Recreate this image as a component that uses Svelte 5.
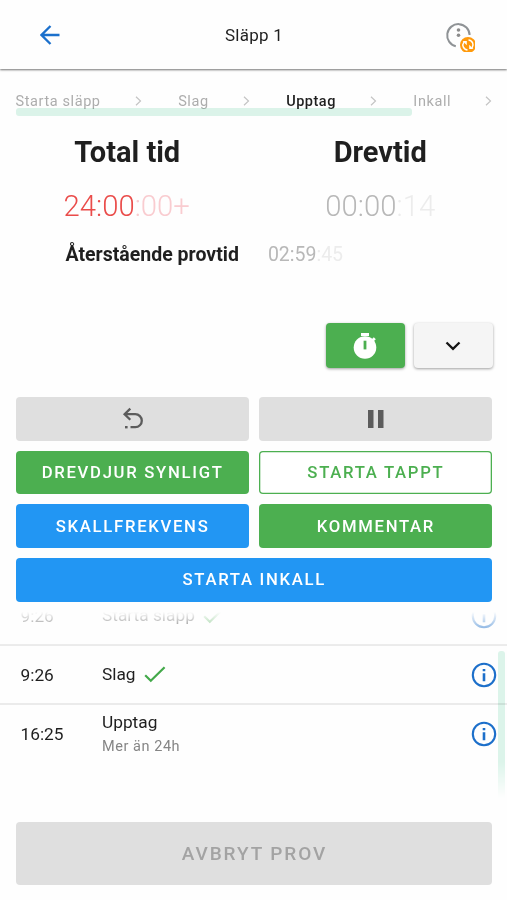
<script lang="ts">
	const steps = [
		{ label: 'Starta släpp', active: false },
		{ label: 'Slag', active: false },
		{ label: 'Upptag', active: true },
		{ label: 'Inkall', active: false }
	];

	const events = [
		{ time: '9:26', title: 'Starta släpp', done: true, note: '' },
		{ time: '9:26', title: 'Slag', done: true, note: '' },
		{ time: '16:25', title: 'Upptag', done: false, note: 'Mer än 24h' }
	];
</script>

<div class="page">
	<header>
		<button class="icon-button" aria-label="Tillbaka">
			<svg class="back" width="20" height="20" viewBox="0 0 20 20">
				<path d="M19.500 10H2M10.500 1 1.500 10l9 9" />
			</svg>
		</button>
		<h1>Släpp 1</h1>
		<button class="icon-button" aria-label="Synkstatus">
			<svg width="34" height="34" viewBox="0 0 34 34">
				<path class="ring" d="M14.800 28.200A11.200 11.200 0 1 1 28.600 17" />
				<circle cx="17.500" cy="12" r="1.800" fill="#8c8c8c" />
				<circle cx="17.500" cy="17.200" r="1.800" fill="#8c8c8c" />
				<circle cx="27" cy="27" r="8" fill="#ff9a0c" />
				<path class="sync" d="M26.500 31.900a4.900 4.900 0 0 1-3.600-7.800M27.500 22.100a4.900 4.900 0 0 1 3.600 7.800" />
				<path fill="#fff" d="M21.600 23h4.200v4.200zM32.400 31h-4.200v-4.200z" />
			</svg>
		</button>
	</header>

	<nav class="steps">
		{#each steps as step}
			<span class="step" class:active={step.active}>{step.label}</span>
			<svg class="chevron" width="7" height="10" viewBox="0 0 7 10"><path d="M1 .8 5.500 5 1 9.200" /></svg>
		{/each}
	</nav>
	<div class="progress"></div>

	<section class="clocks">
		<div class="clock total">
			<h2>Total tid</h2>
			<div class="time">24:00<span>:00+</span></div>
		</div>
		<div class="clock chase">
			<h2>Drevtid</h2>
			<div class="time">00:00<span>:14</span></div>
		</div>
	</section>
	<div class="remaining">
		<strong>Återstående provtid</strong>
		<div class="remaining-time">02:59<span>:45</span></div>
	</div>

	<div class="timer-buttons">
		<button class="raised green" aria-label="Tidtagning">
			<svg width="26" height="28" viewBox="0 0 26 28">
				<path fill="#fff" d="M9 1h8v3H9z" />
				<path fill="#fff" d="m19.500 7.500 2.300-2.300 2 2-2.300 2.300z" />
				<circle cx="13" cy="15.500" r="11.300" fill="#fff" />
				<path fill="#4caf50" d="M11.600 8.700h2.800v8.700h-2.800z" />
			</svg>
		</button>
		<button class="raised light" aria-label="Visa mer">
			<svg width="16" height="10" viewBox="0 0 16 10">
				<path d="m1.500 1.500 6.500 6.300 6.500-6.300" fill="none" stroke="#151515" stroke-width="2.300" />
			</svg>
		</button>
	</div>

	<div class="actions">
		<button class="gray" aria-label="Ångra">
			<svg width="22" height="24" viewBox="0 0 22 24">
				<path d="M2.500 7.200h10.800a6.500 6.500 0 0 1 0 13H8.500M8.300 1.700 2.600 7.200l5.700 5.600" fill="none" stroke="#5c5c5c" stroke-width="2.300" />
				<path d="M3 19h2.600v2.400H3z" fill="#5c5c5c" />
			</svg>
		</button>
		<button class="gray" aria-label="Pausa">
			<svg width="16" height="18" viewBox="0 0 16 18">
				<path d="M0 0h5.500v18H0zM10 0h5.500v18H10z" fill="#5c5c5c" />
			</svg>
		</button>
		<button class="green">DREVDJUR SYNLIGT</button>
		<button class="outlined">STARTA TAPPT</button>
		<button class="blue">SKALLFREKVENS</button>
		<button class="green">KOMMENTAR</button>
		<button class="blue wide">STARTA INKALL</button>
	</div>

	<div class="log">
		<ul>
			{#each events as event}
				<li>
					<span class="event-time">{event.time}</span>
					<div class="event-text">
						<div class="event-title">
							{event.title}
							{#if event.done}
								<svg width="22" height="17" viewBox="0 0 22 17">
									<path d="m1.200 9.300 5.600 5.500L20.600 1.300" fill="none" stroke="#43a94a" stroke-width="2.200" />
								</svg>
							{/if}
						</div>
						{#if event.note}
							<div class="note">{event.note}</div>
						{/if}
					</div>
					<svg class="info" width="26" height="26" viewBox="0 0 26 26">
						<circle cx="13" cy="13" r="11.200" fill="none" stroke="#1c6fca" stroke-width="2.100" />
						<path d="M11.700 6.900h2.600v2.400h-2.600zM11.700 11.300h2.600v7.900h-2.600z" fill="#1c6fca" />
					</svg>
				</li>
			{/each}
		</ul>
		<div class="scrollbar"></div>
	</div>

	<footer>
		<button class="cancel" disabled>AVBRYT PROV</button>
	</footer>
</div>

<style>
	:global(body) {
		margin: 0;
		background: #fefefe;
	}
	.page {
		display: flex;
		flex-direction: column;
		height: 900px;
		overflow: hidden;
		font-family: Roboto, sans-serif;
		color: #1f1f1f;
	}
	button {
		display: flex;
		align-items: center;
		justify-content: center;
		box-sizing: border-box;
		padding: 0;
		border: none;
		border-radius: 4px;
		font-family: inherit;
		font-size: 16.700px;
		font-weight: 500;
		letter-spacing: 1.700px;
		cursor: pointer;
	}
	header {
		flex: none;
		display: flex;
		align-items: center;
		justify-content: space-between;
		box-sizing: border-box;
		height: 69px;
		padding: 0 32px 0 33px;
		box-shadow: 0 1px 2px rgba(0, 0, 0, 0.55);
	}
	h1 {
		margin: 0;
		font-size: 17px;
		font-weight: 400;
		letter-spacing: 0.25px;
	}
	.icon-button {
		width: 34px;
		height: 34px;
		background: none;
	}
	.icon-button svg {
		flex: none;
	}
	.back {
		fill: none;
		stroke: #1b70cc;
		stroke-width: 2.300;
	}
	.ring {
		fill: none;
		stroke: #8f9396;
		stroke-width: 2;
	}
	.sync {
		fill: none;
		stroke: #fff;
		stroke-width: 1.500;
	}
	.steps {
		flex: none;
		display: flex;
		align-items: center;
		height: 20px;
		margin-top: 22px;
		padding-left: 15.500px;
		overflow: hidden;
		font-size: 14.500px;
		letter-spacing: 0.6px;
		white-space: nowrap;
		color: #adadad;
	}
	.step.active {
		color: #1f1f1f;
		font-weight: 500;
		letter-spacing: 0.5px;
	}
	.chevron {
		flex: none;
		margin: 0 36.500px 0 34px;
		fill: none;
		stroke: #c4c4c4;
		stroke-width: 1.200;
	}
	.progress {
		flex: none;
		width: 396px;
		height: 8px;
		margin: -3px 0 0 16px;
		border-radius: 3px;
		background: #dcf4ea;
		mix-blend-mode: multiply;
	}
	.clocks {
		flex: none;
		display: grid;
		grid-template-columns: 1fr 1fr;
		height: 116px;
		text-align: center;
	}
	h2 {
		margin: 18px 0 0;
		font-size: 29px;
		line-height: 36px;
		font-weight: 700;
	}
	.total h2 {
		padding-left: 1px;
	}
	.time {
		margin-top: 18px;
		font-size: 29.300px;
		line-height: 36px;
		font-weight: 350;
	}
	.total .time {
		color: #ea4c4a;
	}
	.total .time span {
		color: #f9ccd0;
	}
	.chase .time {
		color: #b8b8b8;
	}
	.chase .time span,
	.remaining-time span {
		color: #ececec;
	}
	.remaining {
		flex: none;
		display: flex;
		align-items: center;
		gap: 29px;
		height: 44px;
		padding-left: 65.500px;
		font-size: 19.500px;
	}
	.remaining-time {
		color: #b8b8b8;
	}
	.timer-buttons {
		flex: none;
		display: flex;
		justify-content: flex-end;
		gap: 9px;
		margin-top: 47px;
		padding-right: 14px;
	}
	.raised {
		width: 79px;
		height: 45px;
		padding-right: 1px;
		box-shadow: 0 1px 3px rgba(0, 0, 0, 0.38);
	}
	.light {
		background: #f5f5f5;
	}
	.actions {
		flex: none;
		display: grid;
		grid-template-columns: 1fr 1fr;
		grid-auto-rows: 43.700px;
		gap: 10px;
		margin: 29px 15px 0 15.500px;
	}
	.actions button {
		padding-left: 1px;
	}
	.gray {
		background: #dfdfdf;
	}
	.green {
		background: #4caf50;
		color: #fff;
	}
	.blue {
		background: #2296f3;
		color: #fff;
	}
	.outlined {
		background: #fff;
		box-shadow: inset 0 0 0 1.300px #4caf50;
		color: #4caf50;
	}
	.wide {
		grid-column: span 2;
	}
	.log {
		flex: none;
		position: relative;
		height: 188px;
		margin-top: 10px;
		overflow: hidden;
		mask-image: linear-gradient(transparent 0, #000 34px, #000 150px, transparent 186px);
	}
	ul {
		margin: -25px 0 0;
		padding: 0;
		list-style: none;
	}
	li {
		display: flex;
		align-items: center;
		box-sizing: border-box;
		height: 59px;
		padding: 1px 10px 0 20.500px;
		border-bottom: 2px solid #ebebeb;
		font-size: 17.300px;
	}
	li:last-child {
		padding-top: 0;
		border-bottom: none;
	}
	.event-time {
		width: 81.500px;
	}
	.event-text {
		flex: 1;
		margin-top: -1px;
	}
	.event-title {
		display: flex;
		align-items: center;
		gap: 8px;
	}
	.note {
		margin-top: 6px;
		font-size: 14.500px;
		line-height: 17px;
		letter-spacing: 0.55px;
		color: #858585;
	}
	.scrollbar {
		position: absolute;
		top: 39px;
		right: 2px;
		width: 7px;
		height: 149px;
		border-radius: 3px;
		background: #dcf4ea;
		mix-blend-mode: multiply;
	}
	footer {
		padding: 22px 15px 0 15.500px;
	}
	.cancel {
		width: 100%;
		height: 63px;
		padding-left: 1.500px;
		background: #dfdfdf;
		color: #a3a3a3;
		font-size: 19px;
		letter-spacing: 1.9px;
	}
</style>
